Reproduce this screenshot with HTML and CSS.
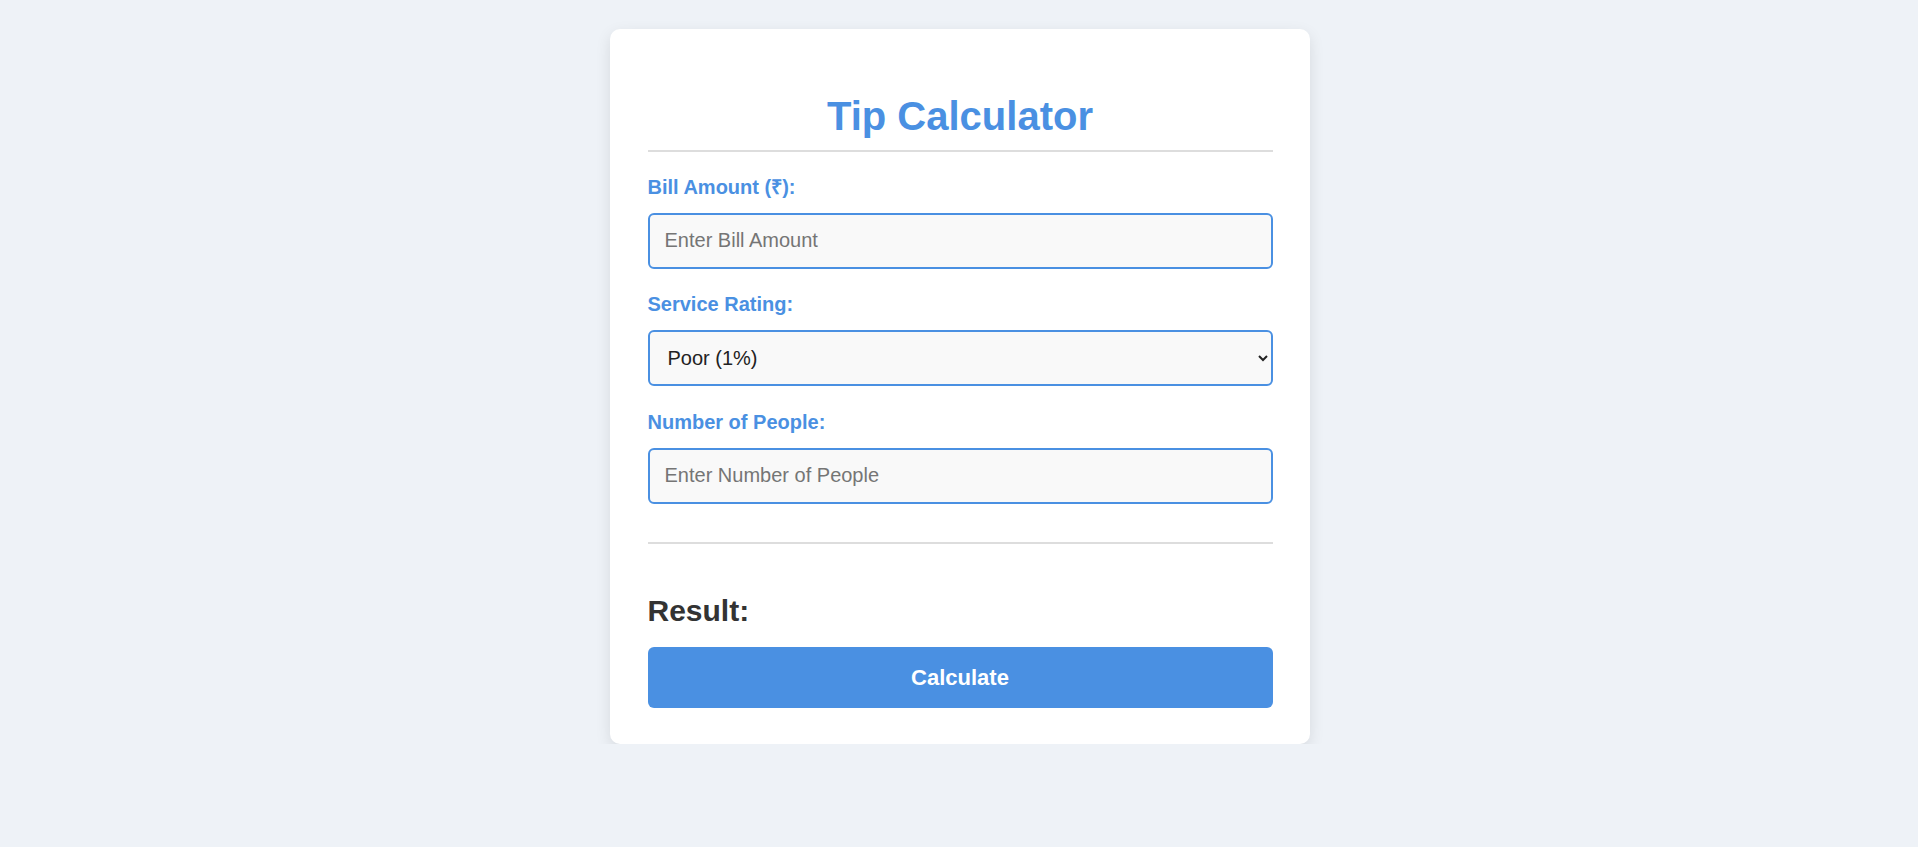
FILE: index.html
```html
<!DOCTYPE html>
<html lang="en">
<head>
<meta charset="UTF-8">
<title>Tip Calculator</title>
<link rel="stylesheet" href="styles.css">
</head>
<body>

<div class="calc">
	<h1 class="calc-title">Tip Calculator</h1>

	<div class="calc-form">
		<div class="calc-group">
			<label class="calc-label" for="bill">Bill Amount (₹):</label>
			<input class="calc-input" type="number" id="bill" placeholder="Enter Bill Amount">
		</div>

		<div class="calc-group">
			<label class="calc-label" for="rating">Service Rating:</label>
			<select class="calc-input calc-select" id="rating">
				<option value="1">Poor (1%)</option>
				<option value="5">Okay (5%)</option>
				<option value="10">Good (10%)</option>
				<option value="15">Great (15%)</option>
				<option value="20">Excellent (20%)</option>
			</select>
		</div>

		<div class="calc-group">
			<label class="calc-label" for="people">Number of People:</label>
			<input class="calc-input" type="number" id="people" placeholder="Enter Number of People">
		</div>
	</div>

	<div class="calc-divider"></div>

	<h2 class="calc-result">Result:</h2>
	<div class="calc-output" id="output"></div>

	<button class="calc-button" type="button">Calculate</button>
</div>

</body>
</html>
```

FILE: styles.css
```css
body {
	margin: 0;
	padding-left: 2px;
	background: #eef2f7;
	font-family: "Liberation Sans", Arial, sans-serif;
	color: #333;
}

.calc {
	width: 700px;
	box-sizing: border-box;
	margin: 29px auto 0;
	padding: 37.5px 37.5px 36px;
	background: #fff;
	border-radius: 10px;
	box-shadow: 0 5px 15px rgba(0,0,0,0.1);
}

.calc-title {
	margin: 26px 0 24px;
	padding-bottom: 11px;
	border-bottom: 2px solid #ddd;
	font-size: 40px;
	line-height: 46px;
	text-align: center;
	color: #4a90e2;
}

.calc-form {
	display: flex;
	flex-direction: column;
	gap: 24.5px;
}

.calc-label {
	display: block;
	margin-bottom: 14px;
	font-size: 20px;
	font-weight: bold;
	line-height: 23px;
	color: #4a90e2;
}

.calc-input {
	display: block;
	width: 100%;
	height: 56px;
	box-sizing: border-box;
	padding: 0 15px;
	border: 2px solid #4a90e2;
	border-radius: 6px;
	background: #f9f9f9;
	font-family: inherit;
	font-size: 20px;
	color: #222;
	outline: none;
}
.calc-input::placeholder {
	color: #757575;
}
.calc-select {
	padding: 0 12px 0 14px;
}

.calc-divider {
	margin-top: 38px;
	border-top: 2px solid #ddd;
}

.calc-result {
	margin: 49px 0 19.5px;
	font-size: 30px;
	line-height: 35px;
	color: #333;
}

.calc-button {
	display: block;
	width: 100%;
	height: 61px;
	border: none;
	border-radius: 6px;
	background: #4a90e2;
	color: #fff;
	font-family: inherit;
	font-size: 22px;
	font-weight: bold;
	cursor: pointer;
}
```
